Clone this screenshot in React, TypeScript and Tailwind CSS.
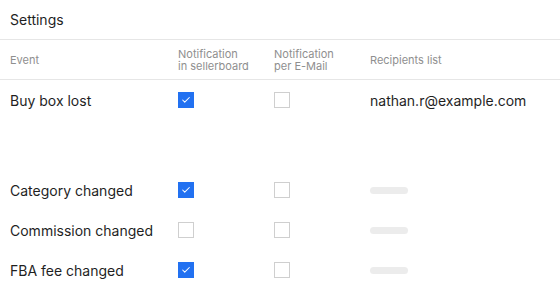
import { Check } from "lucide-react";

type Row = { event: string; app: boolean; mail: boolean; recipients?: string };

const ROWS: Row[] = [
  { event: "Buy box lost", app: true, mail: false, recipients: "nathan.r@example.com" },
  { event: "Category changed", app: true, mail: false },
  { event: "Commission changed", app: false, mail: false },
  { event: "FBA fee changed", app: true, mail: false },
];

function Box({ checked }: { checked: boolean }) {
  return checked ? (
    <span className="w-4 h-4 bg-[#2271f1] flex items-center justify-center">
      <Check className="w-2.5 h-2.5 text-white" strokeWidth={2.5} />
    </span>
  ) : (
    <span className="block w-4 h-4 border border-[#cfcfcf] bg-white" />
  );
}

export default function App() {
  return (
    <div
      className="w-[560px] h-[290px] bg-white overflow-hidden text-[#1f1f1f]"
      style={{ fontFamily: "Inter, 'Noto Sans', sans-serif" }}
    >
      <div className="h-10 px-2.5 flex items-center border-b border-[#e6e6e6] text-[14px]">Settings</div>

      <div className="grid grid-cols-[168px_96px_96px_1fr] h-10 pl-2.5 items-center border-b border-[#e6e6e6] text-[11px] leading-[12px] text-[#8f8f8f]">
        <div>Event</div>
        <div>Notification<br />in sellerboard</div>
        <div>Notification<br />per E-Mail</div>
        <div>Recipients list</div>
      </div>

      {ROWS.map((r, i) => (
        <div
          key={r.event}
          className={`grid grid-cols-[168px_96px_96px_1fr] pl-2.5 text-[14px] ${i === 0 ? "h-[90px] items-start pt-2.5" : "h-10 items-center"}`}
        >
          <div>{r.event}</div>
          <div className={i === 0 ? "pt-0.5" : ""}><Box checked={r.app} /></div>
          <div className={i === 0 ? "pt-0.5" : ""}><Box checked={r.mail} /></div>
          <div>
            {r.recipients ? (
              <span>{r.recipients}</span>
            ) : (
              <span className="block w-[38px] h-[7px] rounded-full bg-[#ececec]" />
            )}
          </div>
        </div>
      ))}
    </div>
  );
}
